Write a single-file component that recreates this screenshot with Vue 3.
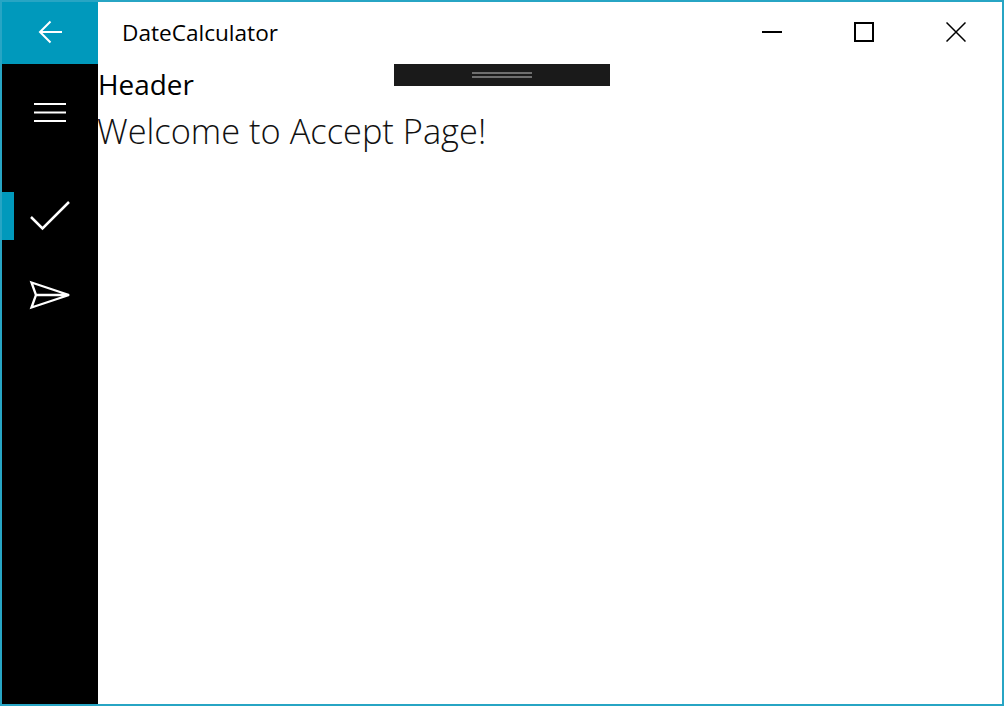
<template>
  <div class="window">
    <aside class="nav">
      <button class="back-btn" aria-label="Back">
        <svg width="32" height="32" viewBox="0 0 32 32" fill="none" stroke="#fff" stroke-width="2">
          <path d="M28 16H6M16.500 5.500 6 16l10.500 10.500" />
        </svg>
      </button>
      <div class="nav-body">
        <button class="nav-item burger" aria-label="Menu">
          <svg width="32" height="20" viewBox="0 0 32 20" fill="none" stroke="#fff" stroke-width="2">
            <path d="M0 2h32M0 10.500h32M0 19h32" />
          </svg>
        </button>
        <button class="nav-item active" aria-label="Accept">
          <svg width="44" height="34" viewBox="0 0 44 34" fill="none" stroke="#fff" stroke-width="2.500">
            <path d="M3 18l11.500 11.500L41 3" />
          </svg>
        </button>
        <button class="nav-item" aria-label="Send">
          <svg width="44" height="32" viewBox="0 0 44 32" fill="none" stroke="#fff" stroke-width="2.300" stroke-miterlimit="3">
            <path d="M3.500 2.500 41 15 3.500 27.500 8 15ZM8 15h33" />
          </svg>
        </button>
      </div>
    </aside>
    <main class="main">
      <header class="titlebar">
        <span class="app-title">DateCalculator</span>
        <div class="controls">
          <span class="control">
            <svg width="20" height="20" viewBox="0 0 20 20" fill="none" stroke="#000" stroke-width="2"><path d="M0 10h20" /></svg>
          </span>
          <span class="control">
            <svg width="20" height="20" viewBox="0 0 20 20" fill="none" stroke="#000" stroke-width="2"><rect x="1" y="1" width="18" height="18" /></svg>
          </span>
          <span class="control">
            <svg width="20" height="20" viewBox="0 0 20 20" fill="none" stroke="#000" stroke-width="1.500"><path d="M.500.500l19 19M19.500.500l-19 19" /></svg>
          </span>
        </div>
      </header>
      <section class="page">
        <h1 class="page-header">Header</h1>
        <p class="welcome">Welcome to Accept Page!</p>
      </section>
    </main>
    <div class="debug-bar"><span class="grip"></span></div>
  </div>
</template>

<script setup>
</script>

<style>
html, body {
  margin: 0;
  background: #fff;
}
</style>

<style scoped>
.window {
  position: relative;
  box-sizing: border-box;
  width: 1004px;
  height: 706px;
  display: flex;
  border: 2px solid #27a5c4;
  background: #fff;
  font-family: "Open Sans", "Noto Sans", sans-serif;
  color: #000;
  overflow: hidden;
}

.nav {
  width: 96px;
  flex: none;
  display: flex;
  flex-direction: column;
  background: #000;
}

.nav-body {
  display: flex;
  flex-direction: column;
  padding-top: 8px;
}

button {
  border: 0;
  padding: 0;
  background: none;
  display: flex;
  align-items: center;
  justify-content: center;
}

.back-btn {
  box-sizing: border-box;
  height: 62px;
  padding-bottom: 2px;
  background: #0099bc;
}

.nav-item {
  position: relative;
  height: 80px;
}

.burger {
  margin-bottom: 24px;
}

.nav-item.active::before {
  content: "";
  position: absolute;
  left: 0;
  top: 16px;
  width: 12px;
  height: 48px;
  background: #0099bc;
}

.main {
  flex: 1;
  display: flex;
  flex-direction: column;
}

.titlebar {
  height: 62px;
  display: flex;
  align-items: center;
  justify-content: space-between;
  padding-left: 24px;
}

.app-title {
  font-size: 22.6px;
  line-height: 62px;
}

.controls {
  display: flex;
}

.control {
  box-sizing: border-box;
  width: 92px;
  height: 62px;
  padding-bottom: 2px;
  display: flex;
  align-items: center;
  justify-content: center;
}

.page {
  flex: 1;
}

.page-header {
  margin: 0 0 2px;
  font-size: 27.9px;
  font-weight: 400;
  line-height: 40px;
}

.welcome {
  margin: 0 0 0 -1px;
  font-size: 34.4px;
  font-weight: 300;
  line-height: 50px;
  color: #111;
}

.debug-bar {
  position: absolute;
  left: 392px;
  top: 62px;
  width: 216px;
  height: 22px;
  display: flex;
  align-items: center;
  justify-content: center;
  background: #1a1a1a;
}

.grip {
  width: 60px;
  height: 2px;
  border-top: 2px solid #6e6e6e;
  border-bottom: 2px solid #6e6e6e;
}
</style>
